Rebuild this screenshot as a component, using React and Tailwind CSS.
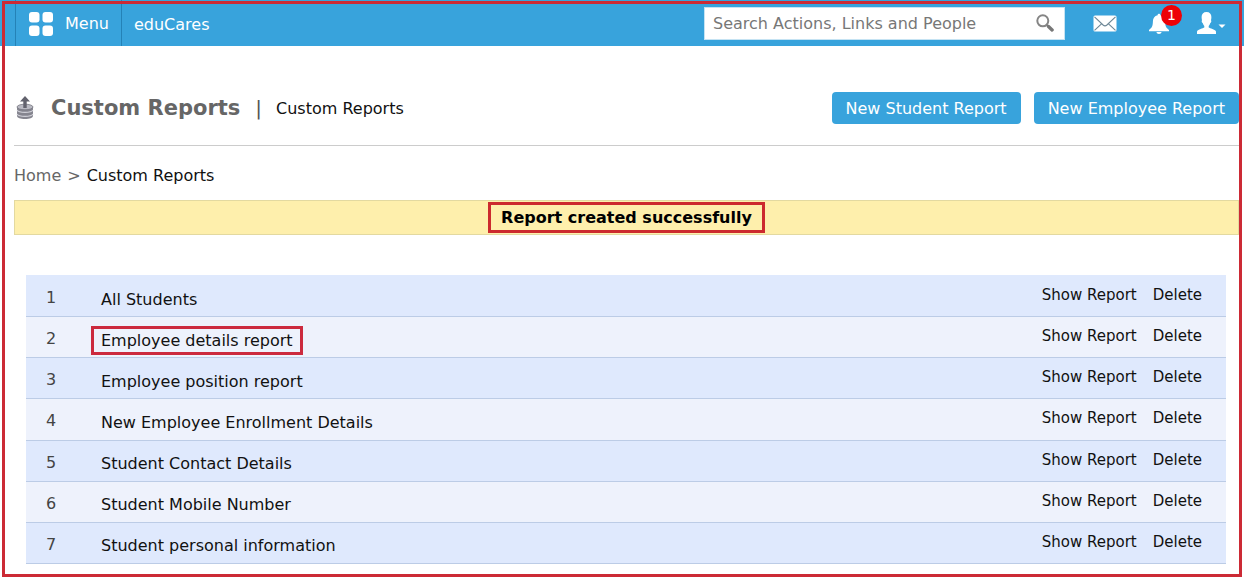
const reports = [
  { name: "All Students" },
  { name: "Employee details report", highlighted: true },
  { name: "Employee position report" },
  { name: "New Employee Enrollment Details" },
  { name: "Student Contact Details" },
  { name: "Student Mobile Number" },
  { name: "Student personal information" },
];

function MenuIcon() {
  return (
    <svg width="24" height="24" viewBox="0 0 24 24" fill="#fff" aria-hidden="true">
      <rect x="0" y="0" width="10.5" height="10.5" rx="3" />
      <rect x="13.5" y="0" width="10.5" height="10.5" rx="3" />
      <rect x="0" y="13.5" width="10.5" height="10.5" rx="3" />
      <rect x="13.5" y="13.5" width="10.5" height="10.5" rx="3" />
    </svg>
  );
}

function SearchIcon() {
  return (
    <svg width="18" height="18" viewBox="0 0 18 18" fill="none" aria-hidden="true">
      <circle cx="6.8" cy="6.8" r="5.5" stroke="#858585" strokeWidth="2" />
      <path d="M11 11l1.5 1.5" stroke="#858585" strokeWidth="2" />
      <path d="M12.5 12.5l3.6 3.4" stroke="#777" strokeWidth="3.4" strokeLinecap="round" />
    </svg>
  );
}

function MailIcon() {
  return (
    <svg width="24" height="17" viewBox="0 0 24 17" aria-hidden="true">
      <rect x="0.5" y="0.5" width="23" height="16" rx="1.5" fill="#fff" />
      <path
        d="M1.5 1.8l8.6 8.2q1.9 1.7 3.8 0l8.6-8.2M1.5 15.4l7-6.6M22.5 15.4l-7-6.6"
        fill="none"
        stroke="#6d8796"
        strokeWidth="1.1"
      />
    </svg>
  );
}

function BellIcon() {
  return (
    <svg width="20" height="21" viewBox="0 0 20 21" fill="#fff" aria-hidden="true">
      <path d="M8.6 2.2a1.4 1.4 0 0 1 2.8 0c3.2.7 4.6 3 4.7 6.3.1 4.4.8 6.3 3.9 8.4v1.3H0v-1.3c3.1-2.1 3.8-4 3.9-8.4.1-3.3 1.5-5.6 4.7-6.3z" />
      <path d="M7.3 19h5.4q-.6 2-2.7 2t-2.7-2z" />
    </svg>
  );
}

function UserIcon() {
  return (
    <svg width="29" height="22" viewBox="0 0 29 22" fill="#fff" aria-hidden="true">
      <path d="M9.5 0c3.2 0 4.9 2 4.9 5 0 1.4-.2 2.5-.4 3.3.8 1.2-.1 2.5-.8 2.9-.3 1.2-.8 2.1-1.5 2.8v1.5c1.3 1 6.3 1.7 7.1 3.6.3.7.2 1.6.2 2.9H0c0-1.3-.1-2.2.2-2.9.8-1.9 5.8-2.6 7.1-3.6V14c-.7-.7-1.2-1.6-1.5-2.8-.7-.4-1.6-1.7-.8-2.9-.2-.8-.4-1.9-.4-3.3 0-3 1.7-5 4.9-5z" />
      <path d="M21.5 12.5h7l-3.5 3.5z" />
    </svg>
  );
}

function DatabaseIcon() {
  return (
    <svg width="18" height="24" viewBox="0 0 18 24" aria-hidden="true">
      <path d="M1 11v9c0 1.7 3.6 3 8 3s8-1.3 8-3v-9z" fill="#85858f" />
      <ellipse cx="9" cy="11" rx="8" ry="2.8" fill="#b9b9c2" stroke="#777782" strokeWidth="0.8" />
      <path d="M1 14c1 1.7 4 2.4 8 2.4s7-.7 8-2.4M1 18c1 1.7 4 2.4 8 2.4s7-.7 8-2.4" fill="none" stroke="#d0d0d8" strokeWidth="1.1" />
      <path d="M9 0l5 5.5h-3.3V12H7.3V5.5H4z" fill="#62626d" />
    </svg>
  );
}

function TopBar() {
  return (
    <header className="flex h-[46px] items-stretch bg-[#38a3dc] pl-[15px] pr-[18px] text-white">
      <button type="button" className="flex items-center gap-3 border-x border-[#2482b7] pl-[13px] pr-3 pt-0.5">
        <MenuIcon />
        <span>Menu</span>
      </button>
      <a href="#home" className="flex items-center px-3 pt-1">eduCares</a>
      <div className="ml-auto flex items-center">
        <form role="search" className="flex h-[33px] w-[361px] items-center border border-[#c5e3f3] bg-white pl-2 pr-2.5">
          <input
            type="search"
            aria-label="Search Actions, Links and People"
            placeholder="Search Actions, Links and People"
            className="min-w-0 flex-1 pt-0.5 text-[#777] outline-none placeholder:text-[#777]"
          />
          <button type="submit" aria-label="Search">
            <SearchIcon />
          </button>
        </form>
        <a href="#messages" aria-label="Messages" className="ml-7">
          <MailIcon />
        </a>
        <a href="#notifications" aria-label="Notifications" className="relative ml-8">
          <BellIcon />
          <span className="absolute -top-2 left-3 flex size-[21px] items-center justify-center rounded-full bg-[#ee0006] text-sm">
            1
          </span>
        </a>
        <button type="button" aria-label="Account" className="ml-7">
          <UserIcon />
        </button>
      </div>
    </header>
  );
}

function ActionButton({ children }) {
  return (
    <button type="button" className="h-8 rounded bg-[#38a3dc] px-3.5 pt-0.5 text-white">
      {children}
    </button>
  );
}

export default function App() {
  return (
    <div className="relative bg-white pb-[15px] font-['DejaVu_Sans',sans-serif] text-base leading-5 text-[#111]">
      <TopBar />
      <main className="pl-3.5 pr-[5px]">
        <div className="flex items-center border-b border-[#ccc] pb-[21px] pt-[46px] pl-0.5">
          <DatabaseIcon />
          <h1 className="ml-[17px] text-[21px] font-bold leading-8 text-[#666]">Custom Reports</h1>
          <span className="ml-[15px] text-xl text-[#555]">|</span>
          <h2 className="ml-3.5 pt-0.5">Custom Reports</h2>
          <div className="ml-auto flex gap-[13px]">
            <ActionButton>New Student Report</ActionButton>
            <ActionButton>New Employee Report</ActionButton>
          </div>
        </div>
        <nav aria-label="Breadcrumb" className="flex gap-1.5 pb-3.5 pt-5 text-[#666]">
          <a href="#home">Home</a>
          <span>&gt;</span>
          <span className="text-[#111]">Custom Reports</span>
        </nav>
        <div role="status" className="flex items-center justify-center border border-[#e3d9a0] bg-[#feefac] py-px">
          <strong className="border-3 border-[#cc2a2e] px-2.5 pb-0.5 pt-[3px] text-black">Report created successfully</strong>
        </div>
        <div className="pl-3 pr-[13px] pt-10">
          <table className="h-[289px] w-full border-separate border-spacing-0 border-t border-[#dfe9fd]">
            <tbody>
              {reports.map((report, i) => (
                <tr key={report.name} className="odd:bg-[#dfe9fd] even:bg-[#eef2fc]">
                  <td className="w-[65px] border-b border-[#bccce6] pl-5 pt-1 text-[#444]">{i + 1}</td>
                  <td className="border-b border-[#bccce6] pt-1.5">
                    <span
                      className={
                        report.highlighted
                          ? "inline-block border-3 border-[#cc2a3e] px-[7px] pb-px pt-0.5"
                          : "inline-block px-2.5 pb-1 pt-[5px]"
                      }
                    >
                      {report.name}
                    </span>
                  </td>
                  <td className="border-b border-[#bccce6] pb-0.5 pr-6 text-right text-[15px]">
                    <a href="#show">Show Report</a>
                    <a href="#delete" className="ml-4">Delete</a>
                  </td>
                </tr>
              ))}
            </tbody>
          </table>
        </div>
      </main>
      <div className="pointer-events-none absolute bottom-0.5 left-0.5 right-0.5 top-px border-3 border-[#cc2a35]" />
    </div>
  );
}
